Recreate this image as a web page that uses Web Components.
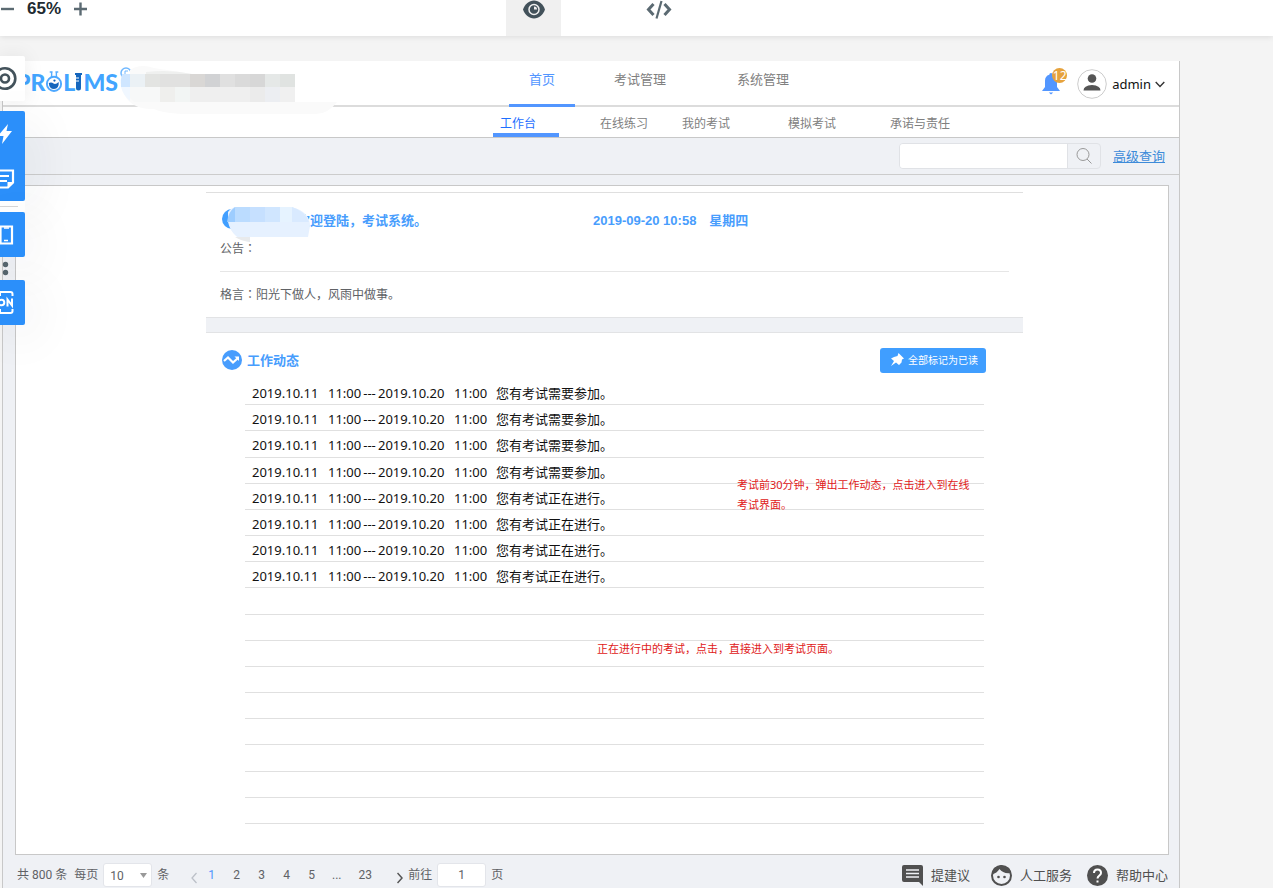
<!DOCTYPE html>
<html lang="zh-CN">
<head>
<meta charset="utf-8">
<meta name="viewport" content="width=device-width, initial-scale=1">
<title>PROLIMS 考试系统</title>
<style>
html, body { margin: 0; height: 100%; }
body {
  background: #f4f4f4;
  color: #606266;
  font: 13px/20px "Noto Sans", "Noto Sans CJK SC", sans-serif;
}
</style>
</head>
<body>
<preview-page></preview-page>
<script>
const define = (name, html, setup) => {
  const tpl = document.createElement('template');
  tpl.innerHTML = '<style>*{box-sizing:border-box}a{color:inherit;text-decoration:none}button,input,select{font:inherit;color:inherit;margin:0}button{border:0;padding:0;background:none}svg{display:block;flex:none}</style>' + html;
  customElements.define(name, class extends HTMLElement {
    constructor() {
      super();
      this.attachShadow({ mode: 'open' }).append(tpl.content.cloneNode(true));
    }
    connectedCallback() { if (setup) setup(this.shadowRoot, this); }
  });
};

/* Top bar of the preview tool: zoom, preview and code modes */
define('zoom-bar', `
<style>
:host { display: flex; align-items: flex-start; height: 36px; background: #fff; box-shadow: 0 1px 6px rgba(0,0,0,.1); position: relative; z-index: 1; color: #212b31; }
.zoom { display: flex; align-items: center; gap: 13px; width: 506px; height: 17px; padding-left: 1px; }
.zoom b { font: bold 17px/17px "Liberation Sans", Arial, sans-serif; }
.mode { width: 55px; height: 36px; display: flex; justify-content: center; align-items: flex-start; }
.on { background: #f0f0f0; }
.code { margin-left: 70px; }
</style>
<div class="zoom">
  <button aria-label="缩小"><svg width="13" height="14" viewBox="0 0 13 14"><path d="M0 7h13" stroke="#5b6a72" stroke-width="2.4"/></svg></button>
  <b>65%</b>
  <button aria-label="放大"><svg width="13" height="14" viewBox="0 0 13 14"><path d="M0 7h13M6.500 .5v13" stroke="#5b6a72" stroke-width="2.4"/></svg></button>
</div>
<button class="mode on" aria-label="预览"><svg width="24" height="20" viewBox="0 0 24 20"><path d="M1 9.500C3 4 7 .5 12 .5S21 4 23 9.500C21 15 17 18.500 12 18.500S3 15 1 9.500z" fill="#42515a"/><circle cx="12" cy="9.500" r="5" fill="#42515a" stroke="#f0f0f0" stroke-width="1.500"/><path d="M12 9.500V6.500a3 3 0 0 1 3 3z" fill="#f0f0f0"/></svg></button>
<button class="mode code" aria-label="代码"><svg width="26" height="20" viewBox="0 0 26 20" fill="none" stroke="#5b6a72" stroke-width="3"><path d="M7.500 4L2.500 9.500l5 5.500M18.500 4l5 5.500-5 5.500"/><path d="M15.500 1l-5 17.500" stroke-width="2.200"/></svg></button>
`);

/* Floating tool strip that hangs over the left window edge */
define('side-tools', `
<style>
:host { position: absolute; left: 0; top: 56px; width: 25px; z-index: 2; display: flex; flex-direction: column; }
button { display: block; height: 45px; width: 25px; }
.locate { background: #fff; border-radius: 0 2px 2px 0; margin-bottom: 10px; box-shadow: 0 0 20px rgba(0,0,0,.08); }
.blue { background: #2b8ffa; border-radius: 0 2px 2px 0; box-shadow: 6px 10px 50px rgba(0,40,60,.09); }
.sep { height: 11px; background: #fff; padding: 5px 7px 0 0; }
hr { border: 0; height: 1px; background: #d6d6d6; margin: 0; }
.dots { height: 23px; }
</style>
<button class="locate" aria-label="定位"><svg width="25" height="45" viewBox="0 0 25 45" fill="none" stroke="#43525b"><circle cx="5" cy="22.500" r="10.300" stroke-width="2.600"/><circle cx="5" cy="22.500" r="4" stroke-width="2.600"/></svg></button>
<div class="blue">
<button aria-label="动作"><svg width="25" height="45" viewBox="0 0 25 45" fill="#fff"><path d="M8 13L-2 25h5.500L2 33l10-13H6.500z"/></svg></button>
<button aria-label="备注"><svg width="25" height="45" viewBox="0 0 25 45" fill="none" stroke="#fff" stroke-width="2.200"><path d="M-4 14.500h17v12l-5 5H-4zM0 20h9M0 25h7"/><path d="M7.500 32v-6H14z" fill="#fff" stroke="none"/></svg></button>
</div>
<div class="sep"><hr></div>
<button class="blue" aria-label="手机"><svg width="25" height="45" viewBox="0 0 25 45" fill="none" stroke="#fff"><path d="M.5 14.500H12v17H.5z" stroke-width="2.200"/><path d="M4 16h5M4 28.500h4" stroke-width="1.500"/></svg></button>
<svg class="dots" width="25" height="23" viewBox="0 0 25 23" fill="#56656d"><circle cx="5.500" cy="7.500" r="2.700"/><circle cx="5.500" cy="15.500" r="2.700"/></svg>
<button class="blue" aria-label="开关"><svg width="25" height="45" viewBox="0 0 25 45" fill="none" stroke="#fff" stroke-width="2"><path d="M0 16v-4h10.500q2 0 2 2v2M0 29v4h10.500q2 0 2-2v-2"/><circle cx="1.500" cy="22.500" r="2.800"/><path d="M7.500 26.500v-7l4.500 6v-7"/></svg></button>
`);

define('brand-logo', `
<style>
:host { display: flex; align-items: center; position: relative; height: 42px; width: 490px; padding-left: 13px; color: #42a5ff; font: 900 23px/24px Lato, sans-serif; }
.tube { margin: 0 1px 0 0; }
.blur { position: absolute; left: 117px; top: 3px; }
</style>
<span>PR</span>
<svg width="18" height="24" viewBox="0 0 19 24"><path d="M5 1.500h3M11 1.500h3M7 2v5M12 2v5" fill="none" stroke="#55acff" stroke-width="1.500"/><circle cx="9.500" cy="14" r="7.500" fill="#fff" stroke="#4da8ff" stroke-width="2"/><path d="M4 13q3-1 5 .5t5.500-1.500q.5 7-5 7.500Q4.500 19.500 4 13z" fill="#1566bd"/><circle cx="10" cy="10.500" r="1.200" fill="#1566bd"/></svg>
<span>L</span>
<svg class="tube" width="7" height="18" viewBox="0 0 7 18"><path d="M0 0h7v2H6v13a2.500 2.500 0 0 1-5 0V2H0z" fill="#1566bd"/><path d="M1 5h3M1 8h3" stroke="#fff"/></svg>
<span>MS</span>
<svg class="blur" width="220" height="50" viewBox="0 0 220 50"><circle cx="6" cy="9" r="5" fill="none" stroke="#70b8ff" stroke-width="1.500"/><path d="M5 12V7h3" fill="none" stroke="#70b8ff"/>
<path d="M10 10V6Q20-1 34 4L72 10H175V38H217Q208 50 196 50H70Q45 50 34 45Q12 46 4 30Q-2 20 3 10z" fill="#fafafa"/><path d="M26 10V8Q50 5 72 10z" fill="#eff0ef"/><path d="M175 10h45v28h-45z" fill="#fff"/>
<path d="M2 10h8v13H1Q0 16 2 10z" fill="#cfe6ff"/><path d="M1 23h9v14Q3 31 1 23z" fill="#f0f7ff"/>
<path d="M10 10h15v13H10z" fill="#ebf1f5"/><path d="M25 10h15v13H25z" fill="#e3e4e2"/><path d="M40 10h30v13H40z" fill="#e1e1e0"/><path d="M70 10h15v13H70z" fill="#d9d7d5"/><path d="M85 10h15v13H85z" fill="#d1d2d4"/><path d="M100 10h15v13h-15z" fill="#e0e0e0"/><path d="M115 10h15v13h-15z" fill="#dadada"/><path d="M130 10h15v13h-15z" fill="#d7d7d7"/><path d="M145 10h15v13h-15z" fill="#e5e8e7"/><path d="M160 10h15v13h-15z" fill="#e0e3e1"/>
<path d="M10 23h30v15H14l-4-4z" fill="#f7f8f8"/><path d="M40 23h15v15H40z" fill="#efefed"/><path d="M55 23h15v15H55z" fill="#f2f5f4"/><path d="M70 23h60v15H70z" fill="#efefef"/><path d="M130 23h15v15h-15z" fill="#ebebeb"/><path d="M145 23h15v15h-15z" fill="#eceef2"/><path d="M160 23h15v15h-15z" fill="#f0f0f0"/></svg>
`);

/* Two-level navigation header */
define('app-header', `
<style>
:host { display: block; background: #fff; color: #808080; }
.main { display: flex; height: 46px; border-bottom: 2px solid #dcdcdc; }
nav { display: flex; }
.main nav { margin-left: 16px; }
.main nav a { height: 46px; line-height: 37px; margin-right: 39px; position: relative; }
.main nav a:first-child { width: 66px; text-align: center; color: #5296ff; border-bottom: 3px solid #5296ff; }
.main nav a + a + a { margin-left: 32px; }
.user { margin-left: auto; display: flex; align-items: center; height: 46px; padding: 0 14px 0 0; color: #111; }
.bell { position: relative; margin-right: 17px; }
.badge { position: absolute; left: 10px; top: -5px; width: 15px; height: 15px; border-radius: 8px; background: #e6a23c; color: #fff; font-size: 12px; line-height: 15px; text-align: center; }
.avatar { margin-right: 5px; }
.admin { display: flex; align-items: center; gap: 4px; }
.sub { height: 31px; padding-left: 490px; border-bottom: 1px solid #c8c8c8; font-size: 12px; }
.sub a { line-height: 34px; height: 30px; margin-right: 34px; }
.sub a:first-child { width: 66px; padding-left: 7px; color: #1e6fff; border-bottom: 4px solid #5296ff; margin-right: 41px; }
.sub a:nth-child(3) { margin-right: 58px; }
.sub a:nth-child(4) { margin-right: 54px; }
</style>
<div class="main">
  <brand-logo></brand-logo>
  <nav><a href="#home">首页</a><a href="#exam">考试管理</a><a href="#system">系统管理</a></nav>
  <div class="user">
    <button class="bell" aria-label="通知"><svg width="18" height="22" viewBox="0 0 18 22" fill="#5296ff"><path d="M9 0a1.700 1.700 0 0 1 1.700 1.700q4.300 1.300 4.300 6V14l3 4H0l3-4V7.700q0-4.700 4.300-6A1.700 1.700 0 0 1 9 0zM6.800 19.500h4.400L9 21.500z"/></svg><span class="badge">12</span></button>
    <svg class="avatar" width="30" height="30" viewBox="0 0 30 30"><circle cx="15" cy="15" r="14.300" fill="#fff" stroke="#ccc"/><circle cx="15" cy="9.500" r="4.300" fill="#555"/><path d="M6.500 21.500q0-5 8.500-5.500 8.500.5 8.500 5.500z" fill="#555"/></svg>
    <button class="admin">admin<svg width="10" height="8" viewBox="0 0 10 8"><path d="M.7 2L5 6.500 9.300 2" fill="none" stroke="#333" stroke-width="1.400"/></svg></button>
  </div>
</div>
<nav class="sub"><a href="#desk">工作台</a><a href="#practice">在线练习</a><a href="#mine">我的考试</a><a href="#mock">模拟考试</a><a href="#duty">承诺与责任</a></nav>
`);

define('search-bar', `
<style>
:host { display: flex; justify-content: flex-end; align-items: center; height: 37px; padding-right: 14px; border-bottom: 1px solid #ccc; }
.field { display: flex; width: 202px; height: 26px; border: 1px solid #e0e2e6; border-radius: 4px; overflow: hidden; margin-right: 12px; }
input { flex: 1; min-width: 0; border: 0; background: #fff; padding: 0 8px; }
button { width: 33px; border-left: 1px solid #e0e2e6; display: grid; place-items: center; }
a { color: #3d8bd9; text-decoration: underline; }
</style>
<div class="field"><input type="text" aria-label="搜索"><button aria-label="查询"><svg width="16" height="16" viewBox="0 0 16 16" fill="none" stroke="#999"><circle cx="7" cy="6.500" r="6"/><path d="M11 11l4.500 4.500"/></svg></button></div>
<a href="#advanced">高级查询</a>
`);

define('welcome-card', `
<style>
:host { display: block; border-top: 1px solid #dfdfdf; font-size: 12px; }
.top { display: flex; align-items: center; height: 20px; margin: 18px 14px 0 16px; position: relative; color: #489dfd; font: bold 13px/20px "Liberation Sans", "Noto Sans CJK SC", sans-serif; }
.hello { width: 371px; padding-left: 75px; }
.mosaic { position: absolute; left: 0; top: -5px; }
time { margin-right: 13px; }
.notice { margin: 0 14px; padding: 8px 0 12px; border-bottom: 1px solid #e6e6e6; }
.motto { margin: 0 14px; padding: 13px 0 12px; }
.colon { font-family: "Noto Sans CJK TC", sans-serif; line-height: 0; }
.band { height: 16px; background: #eff1f5; border: solid #e2e3e5; border-width: 1px 0; }
</style>
<div class="top"><span class="hello">欢迎登陆，考试系统。</span><time>2019-09-20 10:58</time><span>星期四</span>
<svg class="mosaic" width="90" height="36" viewBox="0 0 90 36"><circle cx="10" cy="13" r="10" fill="#419fff"/><path d="M6 16V6Q10 1 14 1H70Q88 6 88 20L86 31H28V36Q10 33 6 16z" fill="#e6f1ff"/><path d="M5 16Q6 6 13 1V16z" fill="#9dcdff"/><path d="M13 1h15v15H13z" fill="#bbdcff"/><path d="M28 1h15v15H28z" fill="#c6e0ff"/><path d="M43 1h15v15H43z" fill="#d0e6ff"/><path d="M58 1h12v15H58z" fill="#e6f3ff"/><path d="M70 1Q83 5 87 16H70z" fill="#d9eaff"/><path d="M13 31h15v5Q19 35 13 31z" fill="#e8eaec"/></svg></div>
<div class="notice">公告<span class="colon" lang="zh-TW">：</span></div>
<div class="motto">格言<span class="colon" lang="zh-TW">：</span>阳光下做人，风雨中做事。</div>
<div class="band"></div>
`);

/* Ruled list of work items; blank rows fill the sheet */
define('activity-list', `
<style>
:host { display: flex; flex-direction: column; flex: 1; }
header { display: flex; align-items: center; height: 54px; padding: 0 37px 0 16px; color: #489dfd; font-weight: bold; }
header svg { margin-right: 5px; }
h2 { margin: 0; font: inherit; font-weight: bold; }
header button { margin-left: auto; display: flex; align-items: center; width: 106px; height: 25px; padding-left: 10px; background: #409eff; color: #fff; border-radius: 3px; font-size: 10px; font-weight: normal; }
header button svg { margin-right: 4px; }
.sheet { position: relative; flex: 1; margin: -8px 39px 0; display: flex; }
ul { flex: 1; margin: 0; padding: 0; list-style: none; display: grid; grid-template-rows: repeat(17, minmax(26px, 1fr)); color: #111; }
li { border-bottom: 1px solid #e0e0e0; padding: 4px 0 0 7px; white-space: nowrap; line-height: 20px; }
li span { display: inline-block; }
.day { width: 76px; } .hour { width: 33px; } .dash { width: 17px; text-align: center; } .end { width: 42px; }
.note { position: absolute; margin: 0; color: #e02020; font-size: 11px; line-height: 20px; white-space: nowrap; }
.a { left: 492px; top: 96px; }
.b { left: 352px; top: 260px; }
</style>
<header><svg width="20" height="20" viewBox="0 0 20 20"><circle cx="10" cy="10" r="10" fill="#489dfd"/><path d="M2 11l4-3.500 5 5L16 8" fill="none" stroke="#fff" stroke-width="2.200"/><path d="M12.500 6.500H17V11z" fill="#fff"/></svg><h2>工作动态</h2>
<button><svg width="14" height="14" viewBox="0 0 14 14" fill="#fff"><path d="M8.500 0L14 5.500l-2 1-.5 3-2.500 2.500L6 9.500 1 13l3-5L1 5.500 4 4l3.500-1z"/></svg>全部标记为已读</button></header>
<div class="sheet"><ul></ul>
<p class="note a">考试前30分钟，弹出工作动态，点击进入到在线<br>考试界面。</p>
<p class="note b">正在进行中的考试，点击，直接进入到考试页面。</p></div>
`, root => {
  const row = text => `<li><span class="day">2019.10.11</span><span class="hour">11:00</span><span class="dash">---</span><span class="day">2019.10.20</span><span class="end">11:00</span>${text}</li>`;
  root.querySelector('ul').innerHTML = row('您有考试需要参加。').repeat(4) + row('您有考试正在进行。').repeat(4) + '<li></li>'.repeat(9);
});

define('page-footer', `
<style>
:host { display: flex; align-items: flex-start; height: 33px; padding: 8px 11px 0 14px; font: 12px/24px Roboto, "Noto Sans CJK SC", sans-serif; color: #606266; }
label { display: flex; gap: 5px; }
.size { margin: 0 22px 0 7px; }
.pick { position: relative; }
.pick svg { position: absolute; right: 5px; top: 10px; pointer-events: none; }
select, input { appearance: none; height: 24px; width: 49px; border: 1px solid #e3e5ea; border-radius: 3px; background: #fff; }
select { padding: 0 6px 2px; }
input { text-align: center; }
.pages { display: flex; margin-left: 2px; }
.pages a { min-width: 25px; text-align: center; }
.pages a:last-child { width: 32px; }
.on { color: #5296ff; }
.arrow { padding-top: 9px; }
.next { margin: 0 5px 0 16px; }
.help { margin-left: auto; display: flex; gap: 15px; font-size: 13px; color: #505050; }
.help a { display: flex; gap: 8px; line-height: 25px; }
.help a:first-child { margin-right: 6px; }
.help svg { margin-top: 2px; }
</style>
<span>共 800 条</span>
<label class="size">每页<span class="pick"><select><option>10</option></select><svg width="7" height="5" viewBox="0 0 7 5"><path d="M0 0h7L3.500 5z" fill="#999"/></svg></span>条</label>
<button class="arrow" aria-label="上一页"><svg width="6" height="12" viewBox="0 0 6 12"><path d="M5.500 1L1 6l4.500 5" fill="none" stroke="#bcc0c8" stroke-width="1.300"/></svg></button>
<nav class="pages"><a class="on" href="#1">1</a><a href="#2">2</a><a href="#3">3</a><a href="#4">4</a><a href="#5">5</a><a href="#more">...</a><a href="#23">23</a></nav>
<button class="arrow next" aria-label="下一页"><svg width="6" height="12" viewBox="0 0 6 12"><path d="M.5 1L5 6 .5 11" fill="none" stroke="#555" stroke-width="1.500"/></svg></button>
<label>前往<input type="text" value="1">页</label>
<div class="help">
<a href="#suggest"><svg width="21" height="21" viewBox="0 0 21 21"><path d="M2 0h17q2 0 2 2v19l-4-4H2q-2 0-2-2V2q0-2 2-2z" fill="#505050"/><path d="M4 5h13M4 8.500h13M4 12h13" stroke="#eff1f5" stroke-width="1.600"/></svg>提建议</a>
<a href="#service"><svg width="21" height="21" viewBox="0 0 21 21"><circle cx="10.500" cy="10.500" r="9.500" fill="none" stroke="#505050" stroke-width="2"/><path d="M1 9.500Q6 8 8.500 4 12 9 20 8L18 3 10 0 3 3z" fill="#505050"/><circle cx="7.500" cy="12" r="1.300" fill="#505050"/><circle cx="13.500" cy="12" r="1.300" fill="#505050"/></svg>人工服务</a>
<a href="#help"><svg width="21" height="21" viewBox="0 0 21 21"><circle cx="10.500" cy="10.500" r="10.500" fill="#505050"/><path d="M7 8q0-3.500 3.500-3.500T14 8c0 2.500-3.500 2.500-3.500 5.500" fill="none" stroke="#fff" stroke-width="2"/><path d="M9.500 15.500h2v2h-2z" fill="#fff"/></svg>帮助中心</a>
</div>
`);

define('preview-page', `
<style>
:host { display: flex; flex-direction: column; min-height: 100vh; position: relative; }
.frame { flex: 1; display: flex; flex-direction: column; margin: 25px 93px 0 2px; border: solid #c8c8c8; border-width: 0 1px; background: #eff1f5; }
.panel { flex: 1; display: flex; flex-direction: column; margin: 10px 10px 0 12px; padding: 6px 145px 30px 190px; border: 1px solid #c8c8c8; background: #fff; }
</style>
<zoom-bar></zoom-bar>
<side-tools></side-tools>
<div class="frame">
  <app-header></app-header>
  <search-bar></search-bar>
  <main class="panel"><welcome-card></welcome-card><activity-list></activity-list></main>
  <page-footer></page-footer>
</div>
`);
</script>
</body>
</html>
